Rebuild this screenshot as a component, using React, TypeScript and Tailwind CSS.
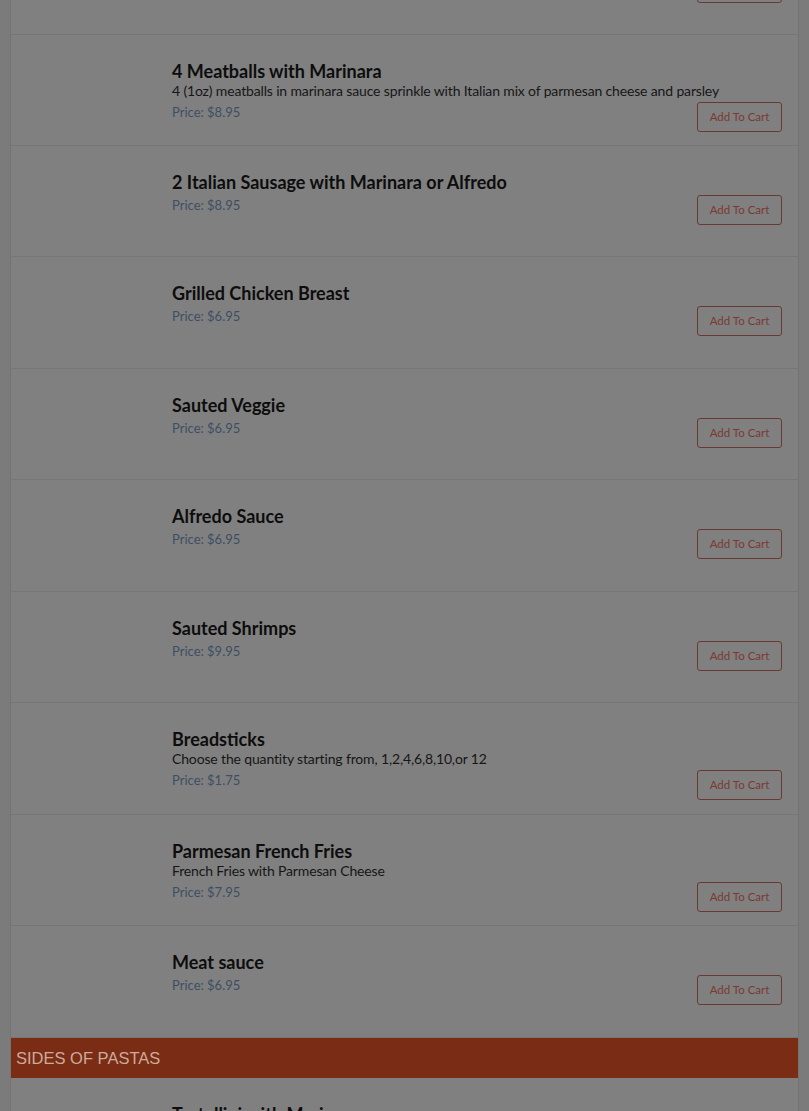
import React from "react";

interface Item {
  name: string;
  desc?: string;
  price: string;
  h: string;
}

const items: Item[] = [
  { name: "Meatball Parmesan", price: "$8.95", h: "h-[111px]" },
  { name: "4 Meatballs with Marinara", desc: "4 (1oz) meatballs in marinara sauce sprinkle with Italian mix of parmesan cheese and parsley", price: "$8.95", h: "h-[111px]" },
  { name: "2 Italian Sausage with Marinara or Alfredo", price: "$8.95", h: "h-[111px]" },
  { name: "Grilled Chicken Breast", price: "$6.95", h: "h-[112px]" },
  { name: "Sauted Veggie", price: "$6.95", h: "h-[111px]" },
  { name: "Alfredo Sauce", price: "$6.95", h: "h-[112px]" },
  { name: "Sauted Shrimps", price: "$9.95", h: "h-[111px]" },
  { name: "Breadsticks", desc: "Choose the quantity starting from, 1,2,4,6,8,10,or 12", price: "$1.75", h: "h-[112px]" },
  { name: "Parmesan French Fries", desc: "French Fries with Parmesan Cheese", price: "$7.95", h: "h-[111px]" },
  { name: "Meat sauce", price: "$6.95", h: "h-[112px]" },
];

const body = { fontFamily: "Lato, 'Noto Sans', sans-serif" };

function Row({ item }: { item: Item }) {
  return (
    <div className={`${item.h} flex border-b border-[#767676] bg-[#808080]`}>
      <div className="w-[161px] shrink-0" />
      <div className="flex-1 pr-[16px] pt-[25px]">
        <div className="text-[18px] leading-[22px] font-bold text-[#0d0d0d]">{item.name}</div>
        {item.desc && (
          <div className="text-[14px] leading-[18px] text-[#161616] tracking-[-0.15px]">{item.desc}</div>
        )}
        <div className="mt-[2px] flex items-start justify-between">
          <div className="text-[13px] leading-[20px] text-[#3d4f63]">Price: {item.price}</div>
          <button className="h-[30px] w-[85px] rounded-[3px] border border-[#683a33] text-[11.5px] text-[#7a3a30]">
            Add To Cart
          </button>
        </div>
      </div>
    </div>
  );
}

export default function App() {
  return (
    <div className="h-[1111px] overflow-hidden bg-[#7b7b7b]" style={body}>
      <div className="mx-[10px] mt-[-76px] border-x border-[#747474] bg-[#808080]">
        {items.map((it) => (
          <Row key={it.name} item={it} />
        ))}
        <div
          className="flex h-[40px] items-center bg-[#7b2c14] px-[5px] text-[16.5px] text-[#cbab9d]"
          style={{ fontFamily: "'Liberation Sans', Arial, sans-serif" }}
        >
          SIDES OF PASTAS
        </div>
        <Row item={{ name: "Tortellini with Marinara", price: "$8.95", h: "h-[111px]" }} />
      </div>
    </div>
  );
}
